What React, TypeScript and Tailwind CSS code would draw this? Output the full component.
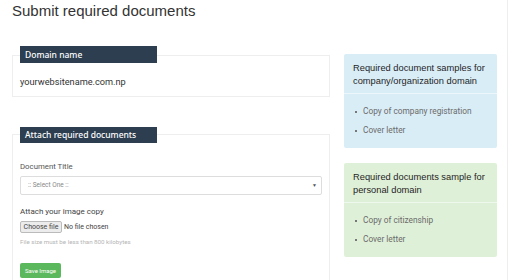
const heading = "font-['Liberation_Sans',Arial,sans-serif]";
const body = "font-['Roboto',sans-serif]";

const Label = ({ text, className }: { text: string; className: string }) => (
  <div
    className={`w-[137px] bg-[#2c3e50] text-white text-[8.5px] font-medium pl-[5px] ${className}`}
  >
    {text}
  </div>
);

const InfoPanel = ({
  title,
  items,
  bg,
  className,
}: {
  title: string;
  items: string[];
  bg: string;
  className?: string;
}) => (
  <div className={`w-[153px] rounded-[2px] ${bg} ${className ?? ""}`}>
    <div
      className={`${heading} pl-[9px] pr-[4px] pt-[8px] pb-[5px] text-[9.3px] leading-[13px] text-[#1f1f1f] border-b border-white/50`}
    >
      {title}
    </div>
    <ul className={`${body} pl-[11px] pt-[8px] pb-[8px] text-[8.3px] text-[#6b6b6b]`}>
      {items.map((item) => (
        <li key={item} className="flex items-center gap-[6px] leading-[19px]">
          <span className="w-[2px] h-[2px] bg-[#777]" />
          {item}
        </li>
      ))}
    </ul>
  </div>
);

export default function App() {
  return (
    <div className="w-[512px] h-[280px] overflow-hidden bg-white flex">
      <div className="w-[507px] pl-[12px]">
        <h1 className={`${heading} text-[15px] leading-[22px] text-[#333] h-[46px]`}>
          Submit required documents
        </h1>
        <div className="flex gap-[14px]">
          <div className="w-[318px]">
            <div className="mt-[9px] border border-[#eeeeee] pb-[7px] px-[7px]">
              <Label text="Domain name" className="-mt-[10px] h-[17px] leading-[17px]" />
              <div className={`${body} mt-[12px] text-[9.2px] leading-[14px] text-[#333]`}>
                yourwebsitename.com.np
              </div>
            </div>

            <div className="mt-[37px] border border-[#eeeeee] h-[200px] px-[7px]">
              <Label text="Attach required documents" className="-mt-[8px] h-[16px] leading-[16px]" />
              <div className={`${body} mt-[17px] text-[7.8px] leading-[14px] text-[#555]`}>
                Document Title
              </div>
              <div className="mt-[2px] h-[19px] w-[302px] border border-[#ddd] rounded-[2px] flex items-center justify-between pl-[7px] pr-[4px]">
                <span className={`${body} text-[6.5px] text-[#888]`}>:: Select One ::</span>
                <span className="text-[5px] text-[#555]">▼</span>
              </div>
              <div className={`${body} mt-[10px] text-[8px] leading-[14px] text-[#444]`}>
                Attach your image copy
              </div>
              <div className={`${body} mt-[2px] flex items-center gap-[2px] text-[7px] text-[#444] whitespace-nowrap`}>
                <span className="h-[12px] w-[42px] flex items-center justify-center bg-[#ececec] border border-[#bbb] rounded-[2px]">
                  Choose file
                </span>
                <span>No file chosen</span>
              </div>
              <div className={`${body} mt-[4px] text-[6.2px] leading-[10px] text-[#b5b5b5]`}>
                File size must be less than 800 kilobytes
              </div>
              <button
                className={`${body} mt-[16px] h-[15px] w-[41px] bg-[#5cb85c] text-white text-[6px] rounded-[2px] flex items-center justify-center`}
              >
                Save Image
              </button>
            </div>
          </div>

          <div className="pt-[8px]">
            <InfoPanel
              title="Required document samples for company/organization domain"
              items={["Copy of company registration", "Cover letter"]}
              bg="bg-[#d9edf7]"
            />
            <InfoPanel
              title="Required documents sample for personal domain"
              items={["Copy of citizenship", "Cover letter"]}
              bg="bg-[#dff0d8]"
              className="mt-[15px]"
            />
          </div>
        </div>
      </div>
      <div className="w-px h-full bg-[#eeeeee]" />
    </div>
  );
}
